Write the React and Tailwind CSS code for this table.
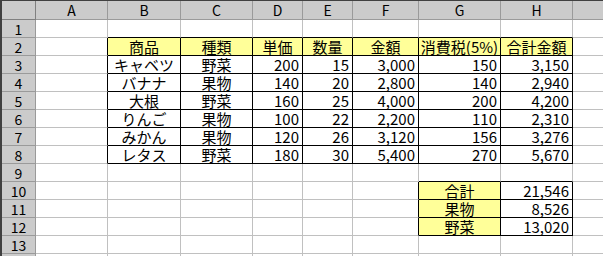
import React from "react";

const COLS = ["A", "B", "C", "D", "E", "F", "G", "H", ""];

// sheet contents keyed by row number; index 0 = column A
const DATA = {
  2: ["", "商品", "種類", "単価", "数量", "金額", "消費税(5%)", "合計金額"],
  3: ["", "キャベツ", "野菜", "200", "15", "3,000", "150", "3,150"],
  4: ["", "バナナ", "果物", "140", "20", "2,800", "140", "2,940"],
  5: ["", "大根", "野菜", "160", "25", "4,000", "200", "4,200"],
  6: ["", "りんご", "果物", "100", "22", "2,200", "110", "2,310"],
  7: ["", "みかん", "果物", "120", "26", "3,120", "156", "3,276"],
  8: ["", "レタス", "野菜", "180", "30", "5,400", "270", "5,670"],
  10: ["", "", "", "", "", "", "合計", "21,546"],
  11: ["", "", "", "", "", "", "果物", "8,526"],
  12: ["", "", "", "", "", "", "野菜", "13,020"],
};

const inTable = (r, c) =>
  (r >= 2 && r <= 8 && c >= 1 && c <= 7) || (r >= 10 && r <= 12 && c >= 6 && c <= 7);

const isHeading = (r, c) =>
  (r === 2 && c >= 1 && c <= 7) || (r >= 10 && r <= 12 && c === 6);

const isCentered = (r, c) => isHeading(r, c) || (r >= 3 && r <= 8 && (c === 1 || c === 2));

function Cell({ r, c }) {
  const text = (DATA[r] && DATA[r][c]) || "";
  const right = inTable(r, c) || inTable(r, c + 1);
  const bottom = inTable(r, c) || inTable(r + 1, c);
  const cls = [
    "h-[18px] flex items-center border-r border-b whitespace-nowrap leading-[16px] text-[15px] text-black",
    right ? "border-r-black" : "border-r-[#c0c0c0]",
    bottom ? "border-b-black" : "border-b-[#c0c0c0]",
    isHeading(r, c) ? "bg-[#ffff99]" : "bg-white",
    isCentered(r, c) ? "justify-center" : "justify-end pr-[3px]",
  ].join(" ");
  return <div className={cls}>{text}</div>;
}

export default function App() {
  // row 14 only peeks in at the bottom edge, so its number stays blank
  const rows = Array.from({ length: 14 }, (_, i) => i + 1);
  return (
    <div
      className="w-[603px] h-[256px] overflow-hidden bg-white border-l-2 border-t border-[#404040]"
      style={{ fontFamily: '"Noto Sans CJK JP", "Noto Sans", sans-serif' }}
    >
      <div className="grid w-max grid-cols-[34px_72px_73px_72px_50px_50px_66px_82px_72px_72px]">
        {/* column headings */}
        <div className="h-[19px] bg-[#cbcbcb] border-r border-b border-[#808080]" />
        {COLS.map((l, i) => (
          <div
            key={i}
            className="h-[19px] flex items-center justify-center bg-[#cbcbcb] border-r border-b border-[#9a9a9a] text-[14px] leading-[16px] text-black"
          >
            {l}
          </div>
        ))}
        {rows.map((r) => (
          <React.Fragment key={r}>
            <div className="h-[18px] flex items-center justify-center bg-[#cbcbcb] border-r border-b border-[#9a9a9a] text-[14px] leading-[16px] text-black">
              {r < 14 ? r : ""}
            </div>
            {COLS.map((_, c) => (
              <Cell key={c} r={r} c={c} />
            ))}
          </React.Fragment>
        ))}
      </div>
    </div>
  );
}
